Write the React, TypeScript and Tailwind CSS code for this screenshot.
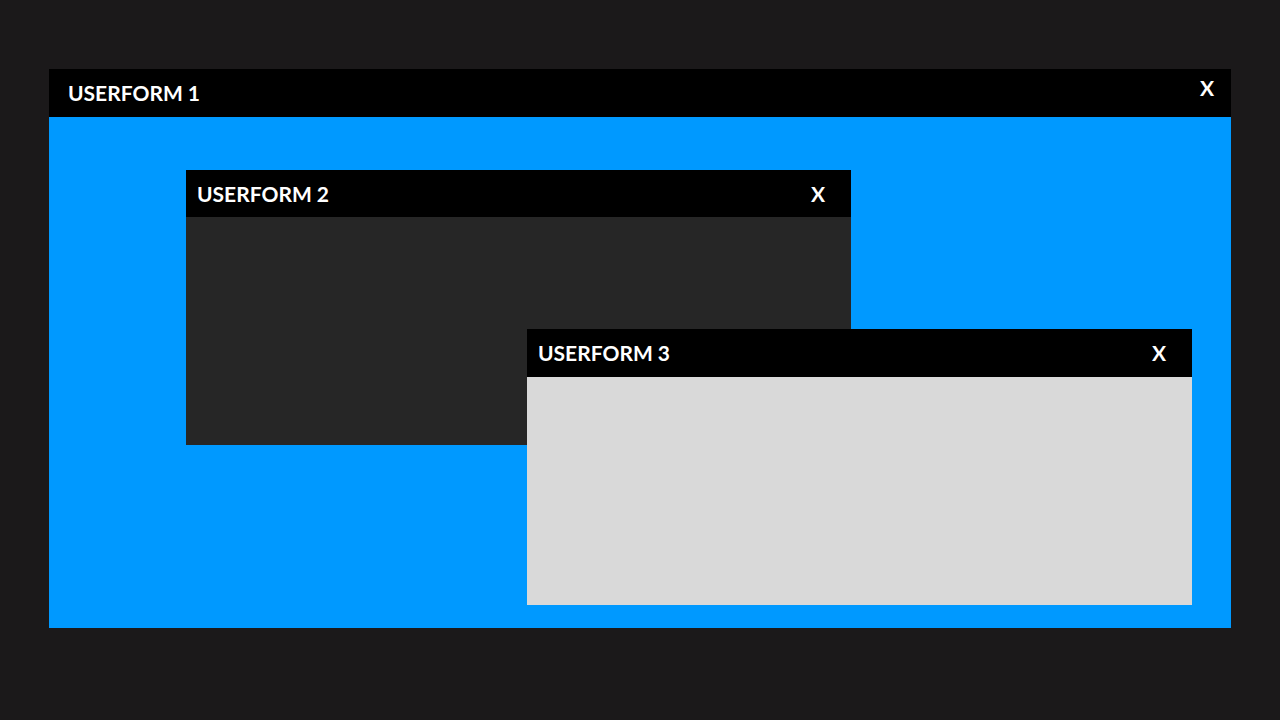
type FormProps = {
  title: string;
  body: string;
  titleClass: string;
  closeClass: string;
  className?: string;
  children?: React.ReactNode;
};

// A userform window: black title bar with caption and close mark, plain body below
function UserForm({ title, body, titleClass, closeClass, className = '', children }: FormProps) {
  return (
    <div className={`flex flex-col ${className}`}>
      <div className={`flex items-center justify-between bg-black text-white font-bold text-[21px] ${titleClass}`}>
        <span>{title}</span>
        <span className={closeClass}>X</span>
      </div>
      <div className={`relative flex-1 ${body}`}>{children}</div>
    </div>
  );
}

export default function App() {
  return (
    <div
      className="h-[720px] w-[1280px] bg-[#1b191a] pl-[49px] pt-[69px]"
      style={{ fontFamily: 'Lato, "Open Sans", sans-serif' }}
    >
      <UserForm
        title="USERFORM 1"
        body="bg-[#0099ff]"
        titleClass="h-[48px] pl-[19px] pr-[17px]"
        closeClass="-mt-[10px]"
        className="h-[559px] w-[1182px]"
      >
        <UserForm
          title="USERFORM 2"
          body="bg-[#262626]"
          titleClass="h-[47px] pl-[11px] pr-[26px]"
          closeClass=""
          className="absolute left-[137px] top-[53px] h-[275px] w-[665px]"
        />
        <UserForm
          title="USERFORM 3"
          body="bg-[#d9d9d9]"
          titleClass="h-[48px] pl-[11px] pr-[26px]"
          closeClass=""
          className="absolute left-[478px] top-[212px] h-[276px] w-[665px]"
        />
      </UserForm>
    </div>
  );
}
